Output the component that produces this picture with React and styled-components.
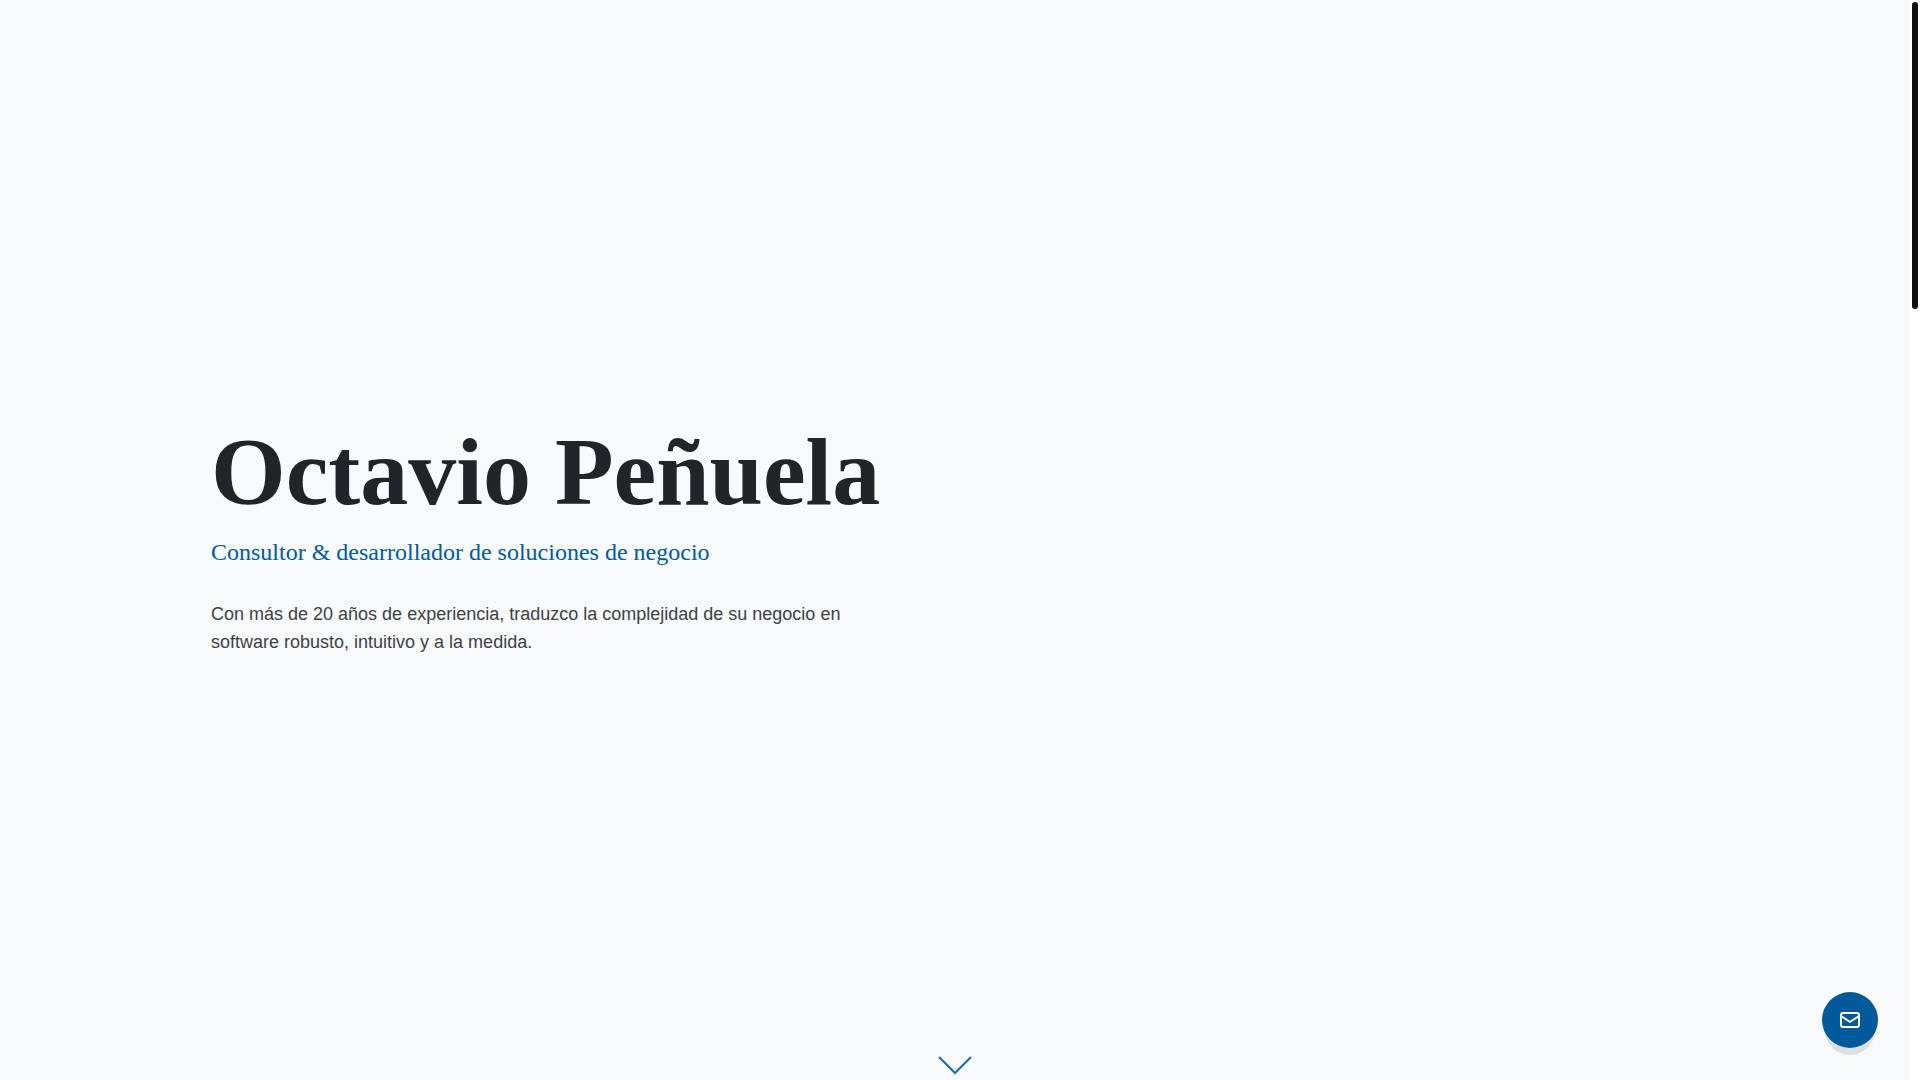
import React from 'react';
import styled, {createGlobalStyle} from 'styled-components';

const App = () => {
  return (
    <>
      <GlobalStyle />
      <Window>
        <Page>
          <Hero>
            <Name>Octavio Peñuela</Name>
            <Role>Consultor &amp; desarrollador de soluciones de negocio</Role>
            <Intro>
              Con más de 20 años de experiencia, traduzco la complejidad de su
              negocio en software robusto, intuitivo y a la medida.
            </Intro>
          </Hero>
          <ScrollHint href="#servicios" aria-label="Bajar">
            <svg width="36" height="20" viewBox="0 0 36 20" fill="none" stroke="currentColor" strokeWidth="2">
              <path d="M2 2 18 18 34 2" />
            </svg>
          </ScrollHint>
          <ContactButton type="button" aria-label="Contacto">
            <svg width="24" height="24" viewBox="0 0 24 24" fill="none" stroke="currentColor" strokeWidth="2" strokeLinecap="round" strokeLinejoin="round">
              <path d="M3 8l7.89 5.26a2 2 0 0 0 2.22 0L21 8M5 19h14a2 2 0 0 0 2-2V7a2 2 0 0 0-2-2H5a2 2 0 0 0-2 2v10a2 2 0 0 0 2 2z" />
            </svg>
          </ContactButton>
        </Page>
        <ScrollTrack>
          <ScrollThumb />
        </ScrollTrack>
      </Window>
    </>
  )
}

const GlobalStyle = createGlobalStyle`
  * {
    box-sizing: border-box;
  }
  body {
    margin: 0;
    overflow: hidden;
    background-color: #f8f9fb;
    font-family: "Liberation Sans", Arial, sans-serif;
  }
`
const Window = styled.div`
  display: flex;
  height: 100vh;
`
const Page = styled.main`
  position: relative;
  flex: 1;
  display: flex;
  flex-direction: column;
  align-items: center;
`
const Hero = styled.section`
  flex: 1;
  width: 100%;
  max-width: 1536px;
  padding: 24px 24px 0;
  display: flex;
  flex-direction: column;
  justify-content: center;
`
const Name = styled.h1`
  margin: 0 0 16px;
  font-family: "Liberation Serif", "Times New Roman", serif;
  font-size: 96px;
  line-height: 96px;
  color: #212529;
`
const Role = styled.p`
  margin: 0 0 32px;
  font-family: "Liberation Serif", "Times New Roman", serif;
  font-size: 24px;
  line-height: 32px;
  color: #005a9c;
`
const Intro = styled.p`
  margin: 0;
  max-width: 672px;
  font-size: 18px;
  line-height: 28px;
  color: #3c4147;
`
const ScrollHint = styled.a`
  display: flex;
  margin-bottom: 5px;
  color: #1a6aa8;
`
const ContactButton = styled.button`
  position: absolute;
  right: 32px;
  bottom: 32px;
  width: 56px;
  height: 56px;
  display: flex;
  justify-content: center;
  align-items: center;
  padding: 0;
  border: none;
  border-radius: 50%;
  background-color: #005a9c;
  color: white;
  box-shadow: 0 10px 0 -3px rgba(0, 0, 0, 0.1);
  cursor: pointer;
`
const ScrollTrack = styled.div`
  width: 10px;
  padding: 2px;
  background-color: white;
`
const ScrollThumb = styled.div`
  height: 307px;
  border-radius: 3px;
  background-color: #111111;
`

export default App;
